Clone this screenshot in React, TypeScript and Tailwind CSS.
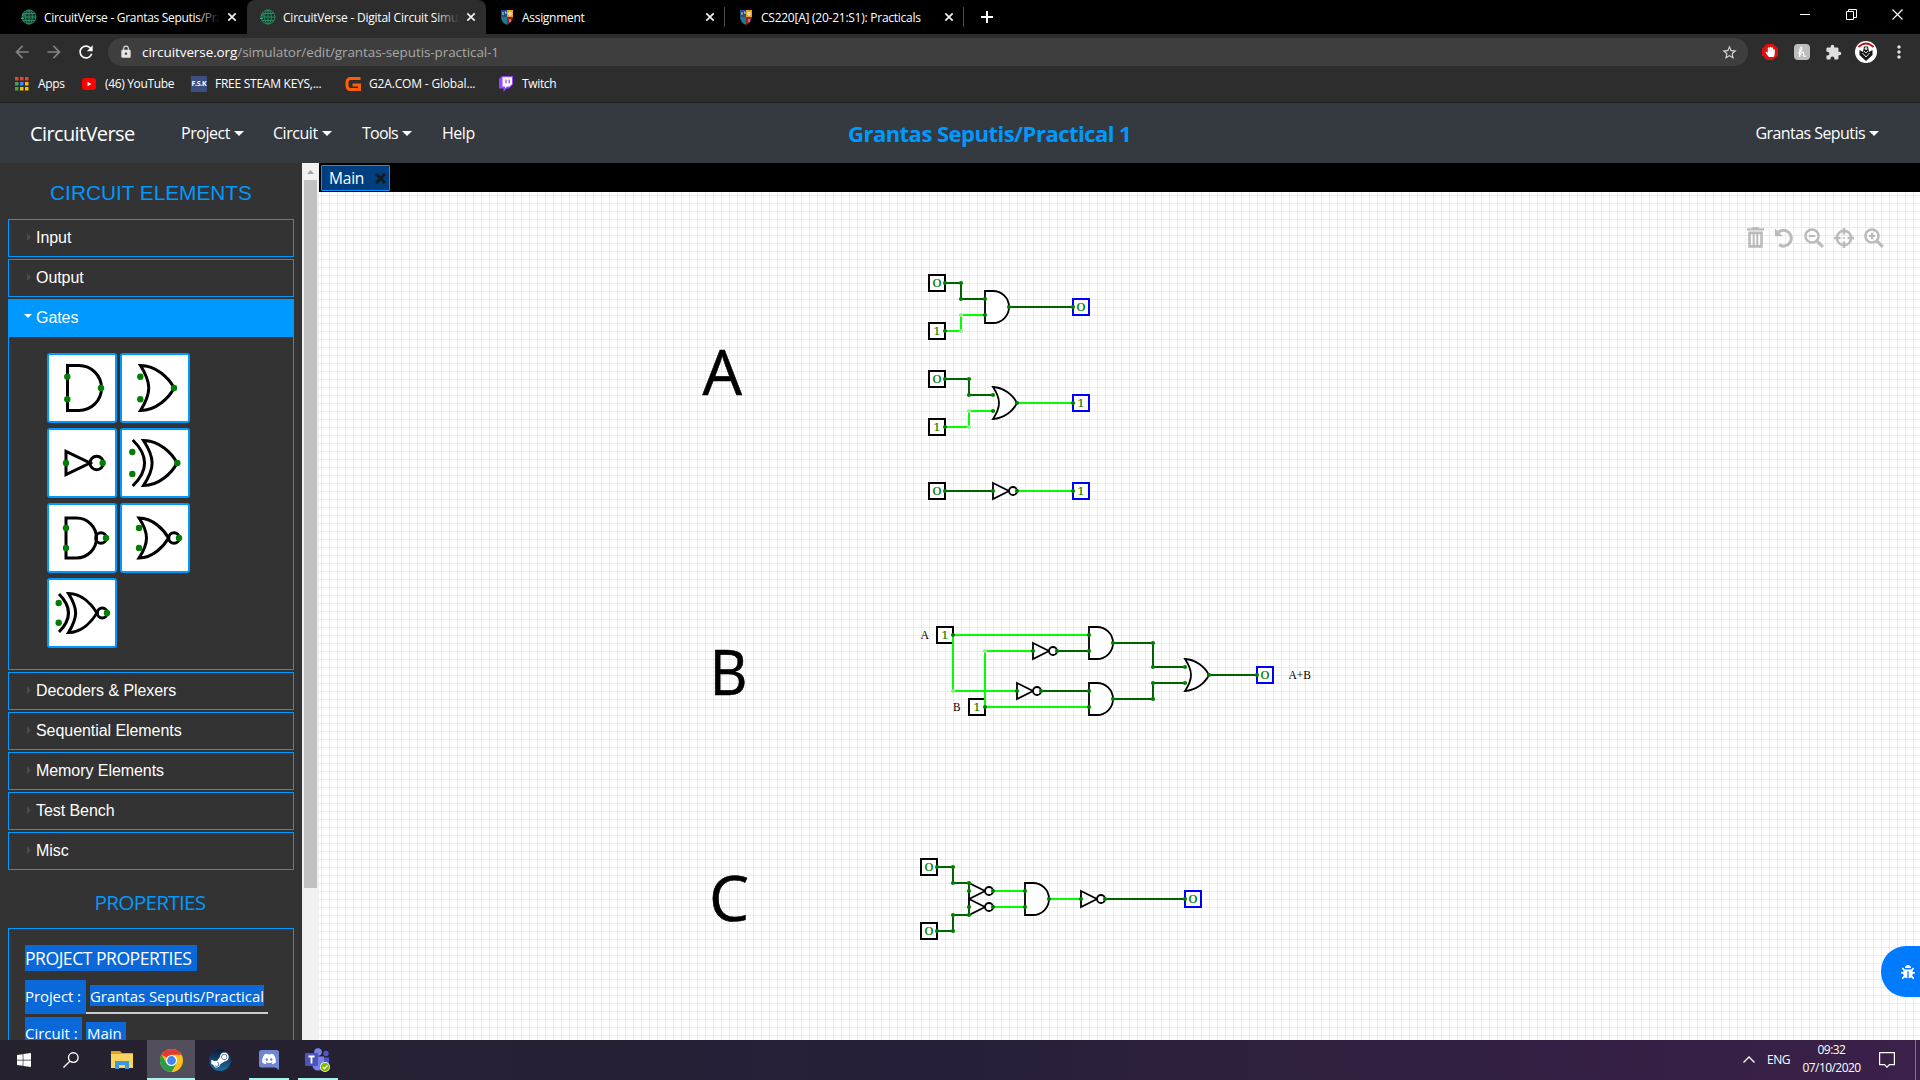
import React from "react";
import { FaBug, FaHandPaper, FaDiscord, FaWindows, FaSteamSymbol } from "react-icons/fa";
import { MdExtension, MdLock, MdStarBorder, MdMoreVert, MdArrowBack, MdArrowForward, MdRefresh } from "react-icons/md";

type XY = { x: number; y: number };

/* ---------- browser chrome ---------- */

const Globe = () => (
  <svg className="size-4 shrink-0" viewBox="0 0 16 16" fill="none" stroke="#2c8a62" strokeWidth="1">
    <circle cx="8" cy="8" r="7" fill="#12382b" />
    <ellipse cx="8" cy="8" rx="3.4" ry="7" />
    <path d="M8 1v14M1 8h14M2 4.5h12M2 11.5h12" />
    <path d="M1 6h3M0 9.500h3" stroke="#46a57c" />
  </svg>
);

const Crest = () => (
  <svg className="size-4 shrink-0" viewBox="0 0 16 16">
    <path d="M2 1h6v7H2z" fill="#1d4f86" />
    <path d="M8 1h6v7H8z" fill="#f2a516" />
    <path d="M2 8h6v8Q2 13 2 8z" fill="#1d7c88" />
    <path d="M14 8H8v8q6-3 6-8z" fill="#8f2433" />
    <path d="M4 3v3M6 3h1v2M10 3.500h2v2.500h-2zM11 10v3" stroke="#fff" strokeOpacity=".8" fill="none" />
  </svg>
);

const TabClose = () => (
  <svg className="size-2.5 shrink-0" viewBox="0 0 10 10" stroke="#f1f1f1" strokeWidth="1.700">
    <path d="M1.300 1.300l7.400 7.400M8.700 1.300l-7.400 7.400" />
  </svg>
);

function BrowserTab({ icon, label, active, rule, fade, track }: { icon: React.ReactNode; label: string; active?: boolean; rule?: boolean; fade?: string; track: string }) {
  return (
    <div className={"relative flex h-[34px] w-[239px] items-center pb-px pl-[13px] " + (active ? "rounded-t-lg bg-[#2d2d2d]" : "")}>
      {icon}
      <div className="relative mb-[2px] ml-[7px] w-[176px] overflow-hidden whitespace-nowrap">
        <span className={"text-xs text-white " + track}>{label}</span>
        {fade && <div className={"absolute inset-y-0 right-0 w-6 bg-linear-to-r from-transparent " + fade} />}
      </div>
      <div className="ml-[7px] flex">
        <TabClose />
      </div>
      {rule && <div className="absolute top-[7px] right-0 h-5 w-px bg-[#4a4a4a]" />}
    </div>
  );
}

function TabStrip() {
  return (
    <div className="flex h-[34px] bg-black pl-2">
      <BrowserTab icon={<Globe />} label="CircuitVerse - Grantas Seputis/Practical" fade="to-black" track="tracking-[-0.3px]" />
      <BrowserTab icon={<Globe />} label="CircuitVerse - Digital Circuit Simulator" fade="to-[#2d2d2d]" active track="tracking-[-0.22px]" />
      <BrowserTab icon={<Crest />} label="Assignment" rule track="tracking-[-0.3px]" />
      <BrowserTab icon={<Crest />} label="CS220[A] (20-21:S1): Practicals" rule track="tracking-[-0.25px]" />
      <svg className="mt-[11px] ml-[17px] size-3" viewBox="0 0 12 12" stroke="#fff" strokeWidth="2">
        <path d="M6 0v12M0 6h12" />
      </svg>
      <div className="flex-1" />
      <div className="flex h-7 w-[138px] items-center justify-around">
        <svg className="size-[11px]" viewBox="0 0 11 11" stroke="#fff"><path d="M0 5.500h10" /></svg>
        <svg className="size-[11px]" viewBox="0 0 11 11" stroke="#fff" fill="none"><path d="M.5 2.500h7v8h-7zM2.500 2.500v-2h8v8h-3" /></svg>
        <svg className="size-[11px]" viewBox="0 0 11 11" stroke="#fff" strokeWidth="1.200"><path d="M.5.5l10 10M10.500.5l-10 10" /></svg>
      </div>
    </div>
  );
}

function AddressBar() {
  return (
    <div className="flex h-9 items-center bg-[#2d2d2d] pl-3">
      <MdArrowBack className="size-5 text-[#828282]" />
      <MdArrowForward className="ml-3 size-5 text-[#828282]" />
      <MdRefresh className="ml-3 size-5 text-white" />
      <div className="ml-[12px] flex h-7 w-[1640px] items-center rounded-full bg-[#3e3e3e] pr-2.5 pl-[11px]">
        <MdLock className="size-3.5 text-[#e4e4e4]" />
        <span className="ml-[9px] flex-1 text-[13.500px] tracking-[-0.09px] text-[#a8a8a8]">
          <span className="text-white">circuitverse.org</span>/simulator/edit/grantas-seputis-practical-1
        </span>
        <MdStarBorder className="size-[17px] text-[#d8d8d8]" />
      </div>
      <svg className="ml-[14px] size-4" viewBox="0 0 16 16">
        <path d="M4.700 0h6.600L16 4.700v6.600L11.300 16H4.700L0 11.300V4.700z" fill="#e01010" />
        <FaHandPaper x="3" y="2.500" size="10.500" color="#fff" />
      </svg>
      <div className="ml-4 flex size-4 items-center justify-center rounded-sm bg-[#bdbdbd]">
        <svg className="size-3.5" viewBox="0 0 14 14" fill="none" stroke="#fff" strokeWidth="1.200">
          <path d="M3 8.500C7 6.500 7.500 2 6 2S4.500 6 4.500 12C5.500 7 8.300 6 8.500 8s-.5 4 2.500 3" />
        </svg>
      </div>
      <MdExtension className="ml-[15px] size-[17px] text-[#dedede]" />
      <svg className="ml-[13px] size-[22px]" viewBox="0 0 22 22">
        <circle cx="11" cy="11" r="11" fill="#fff" />
        <path d="M3.500 6q7.500-7 15 0" stroke="#b3171d" strokeWidth="1.800" fill="none" />
        <path d="M4.500 9l3.500 2L9 5.500h4L14 11l3.500-2v5L11 20l-6.500-6z" fill="#161616" />
        <path d="M7.500 12l3.500 4 3.500-4M9 10l2 2 2-2" stroke="#ddd" fill="none" />
        <circle cx="11" cy="7.500" r="1.500" fill="#ccc" />
      </svg>
      <MdMoreVert className="ml-[12px] size-5 text-[#e4e4e4]" />
    </div>
  );
}

const appDots = ["#ea4335", "#ea4335", "#ea4335", "#34a853", "#4285f4", "#fbbc05", "#34a853", "#fbbc05", "#fbbc05"];

function BookmarkBar() {
  return (
    <div className="flex h-[33px] items-center border-b border-[#1f2022] bg-[#2d2d2d] pb-1 pl-[15px] text-xs text-white">
      <svg className="size-[14px]" viewBox="0 0 14 14">
        {appDots.map((c, i) => (
          <rect key={i} x={(i % 3) * 5} y={Math.floor(i / 3) * 5} width="3.500" height="3.500" fill={c} />
        ))}
      </svg>
      <span className="ml-[9px] w-[44px] tracking-[-0.3px]">Apps</span>
      <svg className="h-[12px] w-[14px]" viewBox="0 0 14 12"><rect width="14" height="12" rx="3" fill="#f00" /><path d="M5.500 3.700v4.600l4-2.300z" fill="#fff" /></svg>
      <span className="ml-[9px] w-[86px] tracking-[-0.35px]">(46) YouTube</span>
      <div className="flex size-4 items-center justify-center bg-[#3b5080]">
        <span className="text-[7px] font-bold tracking-[-0.3px] text-white">F.S.K</span>
      </div>
      <span className="ml-2 w-[130px] whitespace-nowrap tracking-[-0.26px]">FREE STEAM KEYS,...</span>
      <svg className="size-4" viewBox="0 0 16 16" fill="none" stroke="#ff5f00" strokeWidth="3">
        <path d="M15.500 2.500H6Q2 2.500 2 6.500v3Q2 13.500 6 13.500h8.500V9H7.500" />
      </svg>
      <span className="ml-2 w-[130px] whitespace-nowrap tracking-[-0.17px]">G2A.COM - Global...</span>
      <svg className="h-4 w-[14px]" viewBox="0 0 14 16">
        <path d="M3 0h11v8.500l-4 4H7.500L4.500 16v-3.500H0V3z" fill="#9146ff" />
        <path d="M3.500 1.200H13V8l-2.500 2.500H8l-2 2v-2H3.500z" fill="#fff" />
        <path d="M7 3.500v3.700M10.200 3.500v3.700" stroke="#9146ff" strokeWidth="1.300" />
      </svg>
      <span className="ml-[9px] tracking-[-0.35px]">Twitch</span>
    </div>
  );
}

/* ---------- application header ---------- */

const Caret = () => (
  <svg className="ml-1 h-[5px] w-[10px]" viewBox="0 0 10 5" fill="#fff"><path d="M0 0h10L5 5z" /></svg>
);

function Header() {
  return (
    <header className="flex h-[60px] items-center bg-[#343a40] text-base text-white">
      <span className="w-[150px] pt-px pl-[30px] text-[20px] tracking-[-0.62px]">CircuitVerse</span>
      <nav className="flex w-[698px] pl-[31px] tracking-[-0.46px]">
        <span className="flex w-[92px] items-center">Project<Caret /></span>
        <span className="flex w-[89px] items-center">Circuit<Caret /></span>
        <span className="flex w-[80px] items-center tracking-[-0.75px]">Tools<Caret /></span>
        <span>Help</span>
      </nav>
      <span className="flex-1 text-[22px] font-bold tracking-[-0.52px] text-[#0099ff]">Grantas Seputis/Practical 1</span>
      <span className="mr-[41px] flex items-center tracking-[-0.56px]">Grantas Seputis<Caret /></span>
    </header>
  );
}

/* ---------- sidebar ---------- */

type Gate = { d: string; dots: [number, number][]; bubble?: [number, number, number] };

const gates: Gate[] = [
  { d: "M20.500 12.500H32A22.500 22.500 0 0 1 32 57.500H20.500Z", dots: [[20.3, 23.7], [20.3, 46.3], [54, 35]] },
  { d: "M20.500 12.500C36 12.500 49 25 54 35C49 45 36 57.500 20.500 57.500C31.500 40 31.500 30 20.500 12.500Z", dots: [[20.3, 23.7], [20.3, 46.3], [54, 35]] },
  { d: "M19 23.500V46.500L43 35Z", dots: [[19, 35], [55.7, 35]], bubble: [49.7, 35, 6.7] },
  { d: "M12.700 12Q36.500 35 12.700 58M23.500 12.500C39 12.500 52 25 57 35C52 45 39 57.500 23.500 57.500C35 40 35 30 23.500 12.500Z", dots: [[12.3, 24], [12.3, 46], [57.3, 35]] },
  { d: "M19 15H29.500A20 20 0 0 1 29.500 55H19Z", dots: [[19, 25], [19, 45], [59, 35]], bubble: [54, 35, 5.3] },
  { d: "M19 15C33 15 44 27 48.500 35C44 43 33 55 19 55C29 40 29 30 19 15Z", dots: [[19, 25], [19, 45], [59, 35]], bubble: [54, 35, 5.3] },
  { d: "M12 16Q31 35 12 54M21.500 15.500C35 15.500 45 27 50 35C45 43 35 54.500 21.500 54.500C31 39 31 31 21.500 15.500Z", dots: [[11.7, 25], [11.7, 44.7], [60, 35]], bubble: [55.3, 35, 5] },
];

function GateTile({ gate }: { gate: Gate }) {
  return (
    <div className="size-[70px] rounded-[3px] border-2 border-[#0099ff] bg-white">
      <svg className="size-full" viewBox="2 2 66 66" fill="none" stroke="#000" strokeWidth="3">
        <path d={gate.d} />
        {gate.bubble && <circle cx={gate.bubble[0]} cy={gate.bubble[1]} r={gate.bubble[2]} />}
        {gate.dots.map(([x, y]) => (
          <circle key={x + "-" + y} cx={x} cy={y} r="3.200" fill="#008000" stroke="none" />
        ))}
      </svg>
    </div>
  );
}

function Section({ label, open }: { label: string; open?: boolean }) {
  return (
    <div className={"flex h-[38px] items-center border border-[#0099ff] pb-px text-[16px] tracking-[-0.06px] text-white " + (open ? "bg-[#0099ff]" : "")}>
      {open ? (
        <svg className="mr-1 mb-1 ml-[15px] h-2 w-2" viewBox="0 0 8 8" fill="#fff"><path d="M0 2h8L4 6z" /></svg>
      ) : (
        <svg className="mr-1 mb-0.5 ml-[15px] h-2 w-2" viewBox="0 0 8 8" fill="#4a4a4a"><path d="M3 0v8l4-4z" /></svg>
      )}
      {label}
    </div>
  );
}

function Sidebar() {
  return (
    <aside className="flex h-full w-[302px] flex-col overflow-hidden bg-[#333333] px-2 font-['Liberation_Sans',sans-serif]">
      <h2 className="h-14 shrink-0 pt-[14px] text-center text-[20.800px] leading-8 text-[#0099ff]">CIRCUIT ELEMENTS</h2>
      <div className="flex shrink-0 flex-col gap-0.5">
        <Section label="Input" />
        <Section label="Output" />
        <div>
          <Section label="Gates" open />
          <div className="h-[333px] border border-t-0 border-[#0099ff] pt-4 pl-[38px]">
            <div className="grid w-[143px] grid-cols-2 gap-x-[3px] gap-y-[5px]">
              {gates.map((g, i) => <GateTile key={i} gate={g} />)}
            </div>
          </div>
        </div>
        <Section label="Decoders & Plexers" />
        <Section label="Sequential Elements" />
        <Section label="Memory Elements" />
        <Section label="Test Bench" />
        <Section label="Misc" />
      </div>
      <div className="font-['Open_Sans','Noto_Sans',sans-serif]">
        <h2 className="h-[58px] pt-4 pr-0.5 text-center text-[20.800px] leading-8 tracking-[-0.78px] text-[#0099ff]">PROPERTIES</h2>
        <div className="h-[140px] border border-[#0099ff] pt-4 pl-4 whitespace-nowrap text-white">
          <div className="h-[26px] w-[172px] bg-[#0a68d8] text-[17.600px] leading-[27px] tracking-[-0.5px]">PROJECT PROPERTIES</div>
          <div className="mt-[9px] flex h-[34px] text-[15px]">
            <span className="w-[61px] bg-[#0a68d8] leading-[32px] tracking-[-0.1px]">Project :</span>
            <div className="w-[182px] border-b-2 border-[#cccccc] pt-[5px] pl-1">
              <div className="h-[21px] w-[174px] bg-[#0a68d8] leading-[22px] tracking-[-0.05px]">Grantas Seputis/Practical</div>
            </div>
          </div>
          <div className="mt-[3px] flex h-[34px] text-[15px]">
            <span className="w-[57px] bg-[#0a68d8] leading-[32px]">Circuit :</span>
            <span className="mt-[5px] ml-1 h-[21px] w-10 bg-[#0a68d8] pl-px leading-[22px]">Main</span>
          </div>
        </div>
      </div>
    </aside>
  );
}

/* ---------- circuit canvas ---------- */

const DARK = "#006400";
const LIVE = "#00ff00";

const wires: [string, string][] = [
  [DARK, "945,283 961,283 961,299 985,299"],
  [LIVE, "945,331 961,331 961,315 985,315"],
  [DARK, "1009,307 1073,307"],
  [DARK, "945,379 969,379 969,395 993,395"],
  [LIVE, "945,427 969,427 969,411 993,411"],
  [LIVE, "1017,403 1073,403"],
  [DARK, "945,491 993,491"],
  [LIVE, "1017,491 1073,491"],
  [LIVE, "1089,635 953,635 953,691 1017,691"],
  [LIVE, "1089,707 985,707 985,651 1033,651"],
  [DARK, "1057,651 1089,651"],
  [DARK, "1041,691 1089,691"],
  [DARK, "1113,643 1153,643 1153,667 1185,667"],
  [DARK, "1113,699 1153,699 1153,683 1185,683"],
  [DARK, "1209,675 1257,675"],
  [DARK, "937,867 953,867 953,883 969,883 969,891"],
  [DARK, "937,931 953,931 953,915 969,915 969,907"],
  [LIVE, "993,891 1025,891"],
  [LIVE, "993,907 1025,907"],
  [LIVE, "1049,899 1081,899"],
  [DARK, "1105,899 1185,899"],
];

const greenDots: [number, number][] = [
  [961, 283], [961, 299], [969, 379], [969, 395],
  [1153, 643], [1153, 667], [1153, 699], [1153, 683],
  [953, 867], [953, 883], [969, 883], [953, 931], [953, 915], [969, 915],
];
const liveDots: [number, number][] = [[961, 331], [961, 315], [969, 427], [969, 411], [953, 691], [985, 651]];

const Dot = ({ x, y, fill = "#008000" }: XY & { fill?: string }) => <circle cx={x} cy={y} r="2.100" fill={fill} />;

function Pin({ x, y, v, out }: XY & { v: string; out?: boolean }) {
  const w = v === "0" ? 10 : 8.5;
  return (
    <g>
      <rect x={x - 8} y={y - 8} width="16" height="16" fill="#fff" stroke={out ? "#0000ff" : "#000"} strokeWidth="2" />
      <text x={x - w / 2} y={y + 4} fontFamily="DejaVu Serif, serif" fontSize="11.500" textLength={w} lengthAdjust="spacingAndGlyphs" fill="#008000">{v}</text>
    </g>
  );
}

const And = ({ x, y }: XY) => (
  <path transform={`translate(${x} ${y})`} d="M-8-16H0A16 16 0 0 1 0 16H-8Z" fill="#fff" stroke="#000" strokeWidth="1.800" />
);
const Or = ({ x, y }: XY) => (
  <path transform={`translate(${x} ${y})`} d="M-8-16C3-15.500 12-8 16 0C12 8 3 15.500-8 16C0 4 0-4-8-16Z" fill="#fff" stroke="#000" strokeWidth="1.800" />
);
const Not = ({ x, y }: XY) => (
  <g transform={`translate(${x} ${y})`} fill="#fff" stroke="#000" strokeWidth="1.800">
    <path d="M-8-8L8 0L-8 8Z" />
    <circle cx="12" cy="0" r="4" />
  </g>
);

const ands: XY[] = [{ x: 993, y: 307 }, { x: 1097, y: 643 }, { x: 1097, y: 699 }, { x: 1033, y: 899 }];
const ors: XY[] = [{ x: 1001, y: 403 }, { x: 1193, y: 675 }];
const nots: XY[] = [{ x: 1001, y: 491 }, { x: 1041, y: 651 }, { x: 1025, y: 691 }, { x: 977, y: 891 }, { x: 977, y: 907 }, { x: 1089, y: 899 }];
const inputs: (XY & { v: string })[] = [
  { x: 937, y: 283, v: "0" }, { x: 937, y: 331, v: "1" }, { x: 937, y: 379, v: "0" }, { x: 937, y: 427, v: "1" }, { x: 937, y: 491, v: "0" },
  { x: 945, y: 635, v: "1" }, { x: 977, y: 707, v: "1" }, { x: 929, y: 867, v: "0" }, { x: 929, y: 931, v: "0" },
];
const outputs: (XY & { v: string })[] = [
  { x: 1081, y: 307, v: "0" }, { x: 1081, y: 403, v: "1" }, { x: 1081, y: 491, v: "1" }, { x: 1265, y: 675, v: "0" }, { x: 1193, y: 899, v: "0" },
];

function CircuitCanvas() {
  const sans = "Open Sans, Noto Sans, sans-serif";
  const serif = "Liberation Serif, serif";
  return (
    <svg className="block h-[848px] w-[1601px]" viewBox="319 192 1601 848">
      <defs>
        <pattern id="grid" x="1" y="3" width="8" height="8" patternUnits="userSpaceOnUse">
          <path d="M0 0h8v1H1v7H0z" fill="#ebebeb" />
        </pattern>
      </defs>
      <rect x="319" y="192" width="1601" height="848" fill="#fff" />
      <rect x="319" y="192" width="1601" height="848" fill="url(#grid)" />
      <g fontFamily={sans} fontSize="63" stroke="#000" strokeWidth=".6">
        <text x="702.500" y="395" textLength="39.500" lengthAdjust="spacingAndGlyphs">A</text>
        <text x="709.500" y="695" textLength="38" lengthAdjust="spacingAndGlyphs">B</text>
        <text x="709" y="921" textLength="40" lengthAdjust="spacingAndGlyphs">C</text>
      </g>
      {inputs.map((p, i) => <Pin key={i} {...p} />)}
      {outputs.map((p, i) => <Pin key={i} {...p} out />)}
      {ands.map((p, i) => <And key={i} {...p} />)}
      {ors.map((p, i) => <Or key={i} {...p} />)}
      {nots.map((p, i) => <Not key={i} {...p} />)}
      {wires.map(([c, pts]) => <polyline key={pts} points={pts} fill="none" stroke={c} strokeWidth="2" />)}
      {greenDots.map(([x, y]) => <Dot key={x + "," + y} x={x} y={y} />)}
      {liveDots.map(([x, y]) => <Dot key={x + "," + y} x={x} y={y} fill="#90ee90" />)}
      {inputs.map((p, i) => <Dot key={i} x={p.x + 8} y={p.y} />)}
      {outputs.map((p, i) => <Dot key={i} x={p.x - 8} y={p.y} />)}
      {[...ands, ...ors].map((p, i) => (
        <g key={i}>
          <Dot x={p.x - 8} y={p.y - 8} />
          <Dot x={p.x - 8} y={p.y + 8} />
          <Dot x={p.x + 16} y={p.y} />
        </g>
      ))}
      {nots.map((p, i) => (
        <g key={i}>
          <Dot x={p.x - 8} y={p.y} />
          <Dot x={p.x + 16} y={p.y} />
        </g>
      ))}
      <text x="920.500" y="639" fontFamily={serif} fontSize="12" textLength="8.500" lengthAdjust="spacingAndGlyphs">A</text>
      <text x="953" y="711" fontFamily={serif} fontSize="12" textLength="7.500" lengthAdjust="spacingAndGlyphs">B</text>
      <text x="1288.500" y="679" fontFamily={serif} fontSize="12" textLength="22.500" lengthAdjust="spacingAndGlyphs">A+B</text>
    </svg>
  );
}

const Magnifier = ({ plus }: { plus?: boolean }) => (
  <svg className="h-5 w-5" viewBox="0 0 20 20" fill="none" stroke="#bbbbbb" strokeWidth="2.500">
    <circle cx="8" cy="8" r="6.600" />
    <path d="M12.800 12.800l6 6" strokeWidth="3.200" />
    <path d={plus ? "M4.800 8h6.400M8 4.800v6.400" : "M4.800 8h6.400"} strokeWidth="2" />
  </svg>
);

function CanvasTools() {
  return (
    <div className="absolute top-[35px] right-[36px] flex h-[21px] items-center gap-[10px]">
      <svg className="h-[21px] w-[17px]" viewBox="0 0 17 20" preserveAspectRatio="none" fill="none" stroke="#bbbbbb">
        <path d="M0 2.200h17M5.500 1h6" strokeWidth="2.200" />
        <path d="M2.500 5.500v13h12v-13z" strokeWidth="2.600" />
        <path d="M6.700 5v13M10.300 5v13" strokeWidth="2" />
      </svg>
      <svg className="h-5 w-5" viewBox="0 0 20 20" fill="none" stroke="#bbbbbb" strokeWidth="3">
        <path d="M4.500 4A7.900 7.900 0 1 1 5 16.800" />
        <path d="M1 .5v7.800h7.800z" fill="#bbbbbb" stroke="none" />
      </svg>
      <Magnifier />
      <svg className="h-5 w-5" viewBox="0 0 20 20" fill="none" stroke="#bbbbbb" strokeWidth="2.500">
        <circle cx="10" cy="10" r="7.200" />
        <path d="M10 0v6.500M10 13.500v6.500M0 10h6.500M13.500 10h6.500" />
        <circle cx="10" cy="10" r="1.100" fill="#bbbbbb" stroke="none" />
      </svg>
      <Magnifier plus />
    </div>
  );
}

function Workspace() {
  return (
    <main className="flex h-full flex-1 flex-col">
      <div className="flex h-[29px] bg-black pt-0.5 pl-0.5">
        <div className="flex h-[26px] w-[69px] items-center rounded-[1px] border border-[#0099ff] bg-[#003f7f] pt-px pl-[7px] text-[15.500px] tracking-[-0.2px] text-white">
          <span className="w-[46px]">Main</span>
          <svg className="size-[11px]" viewBox="0 0 11 11" stroke="#141a20" strokeWidth="3"><path d="M1 1l9 9M10 1l-9 9" /></svg>
        </div>
      </div>
      <div className="relative h-[848px]">
        <CircuitCanvas />
        <CanvasTools />
        <div className="absolute top-[754px] right-0 flex h-[51px] w-[39px] items-center rounded-l-[25px] bg-[#007bff] pl-[20px]">
          <FaBug className="size-[14px] text-white" />
        </div>
      </div>
    </main>
  );
}

/* ---------- taskbar ---------- */

const Chrome = () => (
  <svg className="size-[23px]" viewBox="0 0 24 24">
    <circle cx="12" cy="12" r="12" fill="#fbc116" />
    <path d="M12 12L1.600 6A12 12 0 0 1 22.400 6H12z" fill="#e33b2e" />
    <path d="M1.600 6A12 12 0 0 0 12 24l5.200-9L12 12 6.800 15z" fill="#2a9d4a" />
    <circle cx="12" cy="12" r="5.800" fill="#fff" />
    <circle cx="12" cy="12" r="4.600" fill="#4285f4" />
  </svg>
);

const Explorer = () => (
  <svg className="h-5 w-[22px]" viewBox="0 0 22 20">
    <path d="M0 1h9l2 2h11v15H0z" fill="#e7a01a" />
    <path d="M0 4h22v14H0z" fill="#fcd462" />
    <path d="M4 19v-8h14v8h-4v-4H8v4z" fill="#3c97dd" />
  </svg>
);

const Teams = () => (
  <svg className="h-6 w-[26px]" viewBox="0 0 26 24">
    <circle cx="13" cy="4" r="3.800" fill="#7b83eb" />
    <circle cx="21" cy="5.500" r="2.700" fill="#5059c9" />
    <path d="M16 9.500h8v7q0 4-4 4h-4z" fill="#5059c9" />
    <path d="M7 8.500h12v8q-1 6-6 6t-6-6z" fill="#7b83eb" />
    <rect x="0" y="5" width="13" height="13" rx="1" fill="#4b53bc" />
    <path d="M3.500 8.500h6M6.500 8.500v7" stroke="#fff" strokeWidth="1.800" />
    <circle cx="20" cy="19" r="5" fill="#fff" />
    <circle cx="20" cy="19" r="4.300" fill="#7fba00" />
    <path d="M17.800 19l1.700 1.700 3-3.200" stroke="#fff" strokeWidth="1.200" fill="none" />
  </svg>
);

function TaskButton({ children, active, running }: { children: React.ReactNode; active?: boolean; running?: boolean }) {
  return (
    <div className={"relative mr-px flex h-10 w-12 items-center justify-center " + (active ? "bg-[#524e5c]" : "")}>
      {children}
      {(running || active) && <div className={"absolute bottom-0 h-0.5 bg-[#a9f5ee] " + (active ? "inset-x-0" : "inset-x-1")} />}
    </div>
  );
}

function Taskbar() {
  return (
    <footer className="flex h-10 bg-linear-to-r from-[#25222e] via-[#271f3a] to-[#3b2049] text-white">
      <TaskButton><FaWindows className="size-4" /></TaskButton>
      <TaskButton>
        <svg className="mr-1 size-4" viewBox="0 0 16 16" fill="none" stroke="#fff" strokeWidth="1.400"><circle cx="10.300" cy="5.600" r="4.800" /><path d="M6.800 9.200L.5 15.500" /></svg>
      </TaskButton>
      <TaskButton><Explorer /></TaskButton>
      <TaskButton active><Chrome /></TaskButton>
      <TaskButton>
        <div className="flex size-[22px] items-center justify-center overflow-hidden rounded-full bg-linear-to-b from-[#0b1d3d] to-[#1b6ea5]">
          <FaSteamSymbol className="size-[20px]" />
        </div>
      </TaskButton>
      <TaskButton running>
        <svg className="size-5" viewBox="0 0 20 20">
          <path d="M2.500 0h15Q20 0 20 2.500V20l-3.500-2.500h-14Q0 17.500 0 15V2.500Q0 0 2.500 0z" fill="#6f86d0" />
          <FaDiscord x="2.500" y="1.500" size="15" color="#fff" />
        </svg>
      </TaskButton>
      <TaskButton running><Teams /></TaskButton>
      <div className="flex-1" />
      <svg className="mt-[16px] h-[7px] w-3" viewBox="0 0 12 7" fill="none" stroke="#fff" strokeWidth="1.300"><path d="M.5 6.500L6 1l5.500 5.500" /></svg>
      <span className="ml-3 w-[36px] text-xs leading-10 tracking-[-0.5px]">ENG</span>
      <div className="flex w-[58px] flex-col items-center pt-px pr-px text-xs leading-[18px] whitespace-nowrap tracking-[-0.55px]">
        <span>09:32</span>
        <span>07/10/2020</span>
      </div>
      <svg className="mt-3 ml-[18px] h-4 w-4" viewBox="0 0 16 16" fill="none" stroke="#fff" strokeWidth="1.200"><path d="M.6.600h14.800v12H10.500L8 15.200 5.500 12.600H.6z" /></svg>
      <div className="mr-1 ml-5 w-px bg-[#83758c]" />
    </footer>
  );
}

export default function App() {
  return (
    <div className="flex h-[1080px] w-[1920px] flex-col overflow-hidden bg-black font-['Open_Sans','Noto_Sans',sans-serif]">
      <TabStrip />
      <AddressBar />
      <BookmarkBar />
      <Header />
      <div className="flex h-[877px]">
        <Sidebar />
        <div className="flex w-[17px] flex-col items-center bg-[#f1f1f1]">
          <div className="flex h-[17px] items-center"><svg className="h-1 w-[7px]" viewBox="0 0 7 4" fill="#a3a3a3"><path d="M0 4h7L3.500 0z" /></svg></div>
          <div className="h-[708px] w-[13px] bg-[#c1c1c1]" />
        </div>
        <Workspace />
      </div>
      <Taskbar />
    </div>
  );
}
